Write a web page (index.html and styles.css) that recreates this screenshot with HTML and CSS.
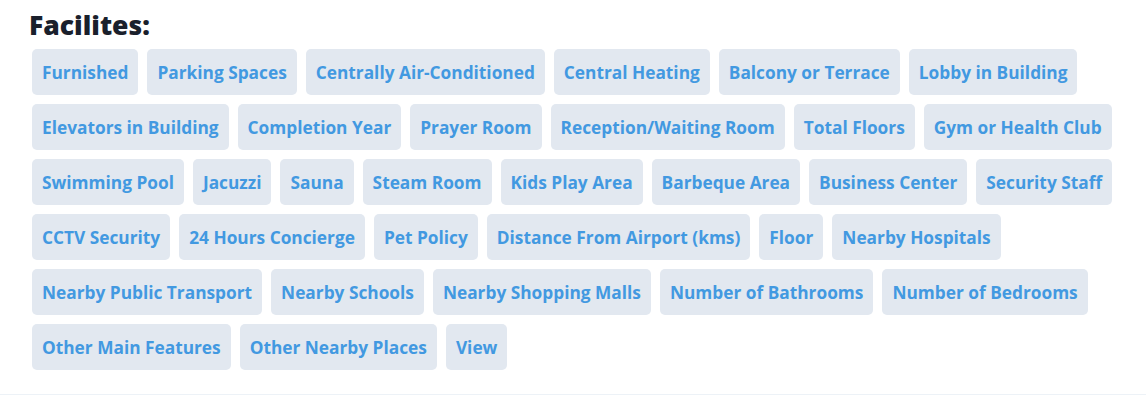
FILE: index.html
```html
<!DOCTYPE html>
<html lang="en">
<head>
<meta charset="utf-8">
<title>Facilities</title>
<link rel="stylesheet" href="styles.css">
</head>
<body>
<section class="facilities">
  <h2 class="facilities-title">Facilites:</h2>
  <ul class="chips">
    <li class="chip">Furnished</li>
    <li class="chip">Parking Spaces</li>
    <li class="chip">Centrally Air-Conditioned</li>
    <li class="chip">Central Heating</li>
    <li class="chip">Balcony or Terrace</li>
    <li class="chip">Lobby in Building</li>
    <li class="chip">Elevators in Building</li>
    <li class="chip">Completion Year</li>
    <li class="chip">Prayer Room</li>
    <li class="chip">Reception/Waiting Room</li>
    <li class="chip">Total Floors</li>
    <li class="chip">Gym or Health Club</li>
    <li class="chip">Swimming Pool</li>
    <li class="chip">Jacuzzi</li>
    <li class="chip">Sauna</li>
    <li class="chip">Steam Room</li>
    <li class="chip">Kids Play Area</li>
    <li class="chip">Barbeque Area</li>
    <li class="chip">Business Center</li>
    <li class="chip">Security Staff</li>
    <li class="chip">CCTV Security</li>
    <li class="chip">24 Hours Concierge</li>
    <li class="chip">Pet Policy</li>
    <li class="chip">Distance From Airport (kms)</li>
    <li class="chip">Floor</li>
    <li class="chip">Nearby Hospitals</li>
    <li class="chip">Nearby Public Transport</li>
    <li class="chip">Nearby Schools</li>
    <li class="chip">Nearby Shopping Malls</li>
    <li class="chip">Number of Bathrooms</li>
    <li class="chip">Number of Bedrooms</li>
    <li class="chip">Other Main Features</li>
    <li class="chip">Other Nearby Places</li>
    <li class="chip">View</li>
  </ul>
</section>
</body>
</html>
```

FILE: styles.css
```css
* { box-sizing: border-box; }
html, body {
  margin: 0;
  padding: 0;
  background: #ffffff;
  font-family: "Open Sans", "Noto Sans", Arial, sans-serif;
}
.facilities {
  padding: 8px 32px 24px 32px;
  border-bottom: 1px solid #edf2f7;
}
.facilities-title {
  margin: 0 0 0 -3px;
  font-size: 26.5px;
  line-height: 34px;
  font-weight: 800;
  color: #1a202c;
}
.chips {
  list-style: none;
  margin: 7px 0 0 0;
  padding: 0;
  display: flex;
  flex-wrap: wrap;
  gap: 9px 9px;
  max-width: 1090px;
}
.chip {
  background: #e2e8f0;
  color: #4299e1;
  border-radius: 5px;
  padding: 1px 10px 0 10px;
  height: 46px;
  line-height: 45px;
  font-size: 17.3px;
  font-weight: 700;
  white-space: nowrap;
}
```
